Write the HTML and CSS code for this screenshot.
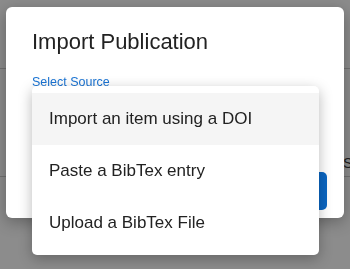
FILE: index.html
```html
<!DOCTYPE html>
<html lang="en">
<head>
    <meta charset="UTF-8">
    <meta name="viewport" content="width=device-width, initial-scale=1.0">
    <title>Import Publication</title>
    <link rel="stylesheet" href="styles.css">
</head>
<body>
    <div class="page">
        <div class="page-header"></div>
        <div class="page-row">
            <span class="page-text">Submit</span>
        </div>
    </div>
    <div class="backdrop"></div>
    <div class="modal">
        <h2 class="modal-title">Import Publication</h2>
        <label class="field-label">Select Source</label>
        <div class="modal-footer">
            <button class="btn">Continue</button>
        </div>
        <ul class="menu">
            <li class="menu-item active">Import an item using a DOI</li>
            <li class="menu-item">Paste a BibTex entry</li>
            <li class="menu-item">Upload a BibTex File</li>
        </ul>
    </div>
</body>
</html>
```

FILE: styles.css
```css
body {
    font-family: 'Liberation Sans', Arial, sans-serif;
    background-color: #ffffff;
    margin: 0;
    padding: 0;
    height: 269px;
    overflow: hidden;
}
.page-header {
    height: 68px;
    border-bottom: 1px solid #cfcfcf;
}
.page-row {
    height: 108px;
    border-bottom: 1px solid #cfcfcf;
    padding-left: 343px;
    padding-top: 85px;
    box-sizing: border-box;
    white-space: nowrap;
}
.page-text {
    font-size: 15px;
    color: #3a3a3a;
}
.backdrop {
    position: fixed;
    top: 0;
    left: 0;
    right: 0;
    bottom: 0;
    background: rgba(0,0,0,0.45);
}
.modal {
    position: absolute;
    top: 7px;
    left: 6px;
    width: 338px;
    height: 211px;
    box-sizing: border-box;
    padding: 22px 17px 8px 26px;
    background: white;
    border-radius: 6px;
    box-shadow: 0 4px 16px rgba(0,0,0,0.3);
    display: flex;
    flex-direction: column;
}
.modal-title {
    margin: 0;
    font-size: 22px;
    font-weight: 400;
    line-height: 25px;
    color: #222;
}
.field-label {
    margin-top: 21px;
    font-size: 12.5px;
    line-height: 15px;
    color: #1a74d4;
}
.modal-footer {
    margin-top: auto;
    display: flex;
    justify-content: flex-end;
}
.btn {
    background-color: #0a66c2;
    color: white;
    border: none;
    border-radius: 5px;
    height: 38px;
    padding: 0 20px;
    font-family: inherit;
    font-size: 15px;
}
.menu {
    position: absolute;
    top: 79px;
    left: 26px;
    width: 287px;
    list-style-type: none;
    margin: 0;
    padding: 7px 0 6px;
    background: white;
    border-radius: 5px;
    box-shadow: 0 4px 14px rgba(0,0,0,0.28);
}
.menu-item {
    height: 52px;
    padding-left: 17px;
    display: flex;
    align-items: center;
    font-size: 17px;
    color: #222;
}
.menu-item.active {
    background-color: #f5f5f5;
}
```
